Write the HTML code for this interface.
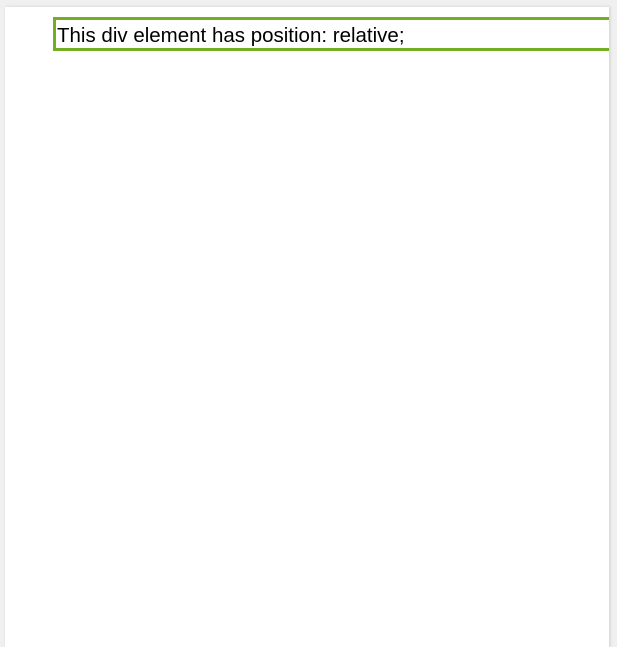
<!DOCTYPE html>
<html><head><style>
html,body{margin:0;padding:0;background:#f0f0f0;width:617px;height:627px;overflow:hidden}
.panel{position:absolute;left:5px;top:7px;width:604px;height:640px;background:#fff;box-shadow:1px 0 3px rgba(0,0,0,0.15);overflow:hidden}
.box{position:absolute;left:48px;top:10px;width:555px;height:24px;padding-top:4px;border:3px solid #73ad21;border-right:none;font-family:"Liberation Sans","Noto Sans CJK KR",sans-serif;font-size:20.5px;line-height:24px;color:#000;padding-left:1px;box-sizing:content-box;white-space:nowrap}
</style></head><body>
<div class="panel"><div class="box">This div element has position: relative;</div></div>
</body></html>
